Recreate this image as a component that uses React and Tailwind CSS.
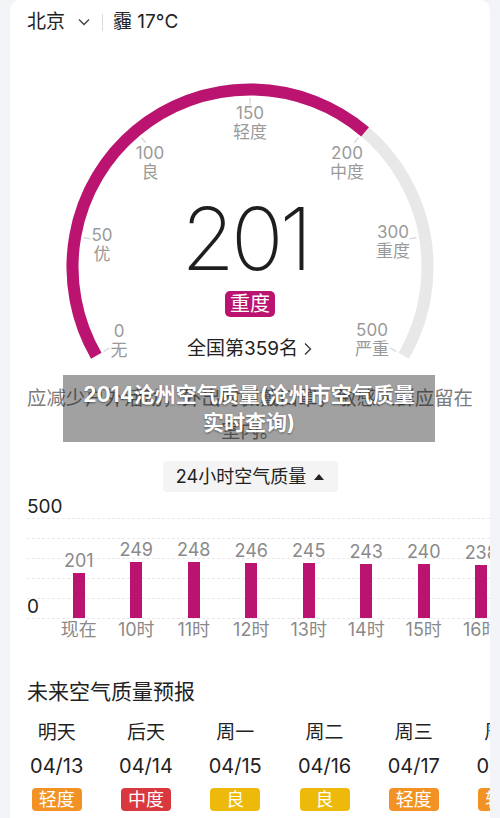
import React from "react";

const MAG = "#bb1470";

function Gauge() {
  const cx = 240, cy = 223, r = 177.5;
  const pt = (deg, rad) => {
    const a = (deg * Math.PI) / 180;
    return [cx + rad * Math.cos(a), cy - rad * Math.sin(a)];
  };
  const [sx, sy] = pt(210, r);
  const [ex, ey] = pt(-30, r);
  const [mx, my] = pt(49.6, r);
  const ticks = [210, 170, 130, 90, 50, 10, -30];
  const labels = [
    ["0", "无", 109, 297],
    ["50", "优", 92, 201],
    ["100", "良", 140, 119],
    ["150", "轻度", 240, 79],
    ["200", "中度", 337, 119],
    ["300", "重度", 383, 198],
    ["500", "严重", 362, 296],
  ];
  return (
    <svg width="480" height="338" viewBox="0 0 480 338" className="block">
      <path
        d={`M ${sx} ${sy} A ${r} ${r} 0 1 1 ${ex} ${ey}`}
        fill="none"
        stroke="#e8e8e8"
        strokeWidth="12"
      />
      <path
        d={`M ${sx} ${sy} A ${r} ${r} 0 0 1 ${mx} ${my}`}
        fill="none"
        stroke={MAG}
        strokeWidth="12"
      />
      {ticks.map((t) => {
        const [x1, y1] = pt(t, 162);
        const [x2, y2] = pt(t, 169);
        return <line key={t} x1={x1} y1={y1} x2={x2} y2={y2} stroke="#d4d4d4" strokeWidth="1.2" />;
      })}
      {labels.map(([n, l, x, y]) => (
        <g key={n} fill="#9a9a9a" fontSize="17" textAnchor="middle" fontFamily="Inter, 'Noto Sans CJK SC', sans-serif">
          <text x={x} y={y - 4}>{n}</text>
          <text x={x} y={y + 15}>{l}</text>
        </g>
      ))}
    </svg>
  );
}

const bars = [
  [201, "现在"],
  [249, "10时"],
  [248, "11时"],
  [246, "12时"],
  [245, "13时"],
  [243, "14时"],
  [240, "15时"],
  [238, "16时"],
];

const forecast = [
  ["明天", "04/13", "轻度", "bg-[#f29224]"],
  ["后天", "04/14", "中度", "bg-[#d8383e]"],
  ["周一", "04/15", "良", "bg-[#edba0b]"],
  ["周二", "04/16", "良", "bg-[#edba0b]"],
  ["周三", "04/17", "轻度", "bg-[#f29224]"],
  ["周四", "04/18", "轻度", "bg-[#f29224]"],
];

export default function App() {
  return (
    <div className="relative w-[500px] h-[818px] overflow-hidden bg-[#f3f4f8] font-[Inter,'Noto_Sans_CJK_SC',sans-serif] text-[#222]">
      <div className="mx-[10px] h-[830px] bg-white rounded-t-[10px] overflow-hidden">
        {/* header */}
        <div className="h-[44px] flex items-center pl-[17px] text-[19px]">
          <span>北京</span>
          <svg width="12" height="8" viewBox="0 0 12 8" className="ml-[13px]">
            <path d="M1 1.5 L6 6.5 L11 1.5" fill="none" stroke="#444" strokeWidth="1.4" />
          </svg>
          <span className="ml-[12px] w-px h-[17px] bg-[#dcdcdc]" />
          <span className="ml-[10px]">霾 17°C</span>
        </div>

        {/* gauge */}
        <div className="relative h-[338px]">
          <Gauge />
          <div className="absolute inset-x-0 top-[151px] flex flex-col items-center">
            <div className="text-[87px] leading-none font-extralight tracking-[-4px] pr-[10px] text-[#1e1e1e]">201</div>
            <div className="mt-[9px] h-[26px] px-[5px] rounded-[5px] bg-[#bb1470] text-white text-[20px] leading-[26px]">重度</div>
            <div className="mt-[20px] flex items-center text-[19px] leading-[24px] text-[#222]">
              <span>全国第359名</span>
              <svg width="10" height="14" viewBox="0 0 10 14" className="ml-[5px]">
                <path d="M2 1.5 L7.5 7 L2 12.5" fill="none" stroke="#333" strokeWidth="1.3" />
              </svg>
            </div>
          </div>
        </div>

        {/* advice */}
        <p className="text-center text-[19.4px] leading-[33px] text-[#7c7c7c] whitespace-nowrap">
          应减少户外活动，外出时佩戴口罩，敏感人群应留在
          <br />
          室内。
        </p>

        {/* toggle */}
        <div className="mt-[13px] flex justify-center">
          <div className="h-[31px] w-[175px] rounded-[4px] bg-[#f4f4f4] flex items-center justify-center gap-[8px] text-[18px]">
            <span>24小时空气质量</span>
            <svg width="10" height="6" viewBox="0 0 10 6">
              <path d="M0 6 L5 0 L10 6 Z" fill="#222" />
            </svg>
          </div>
        </div>

        {/* chart */}
        <div className="relative mt-[3px] h-[150px]">
          <div className="absolute left-[17px] right-0 top-[23px] h-[101px] flex flex-col justify-between">
            {[0, 1, 2, 3, 4, 5].map((i) => (
              <div key={i} className="border-t border-dashed border-[#e9e9e9]" />
            ))}
          </div>
          <div className="absolute left-[17px] top-[2px] text-[19px] leading-[20px] text-[#222]">500</div>
          <div className="absolute left-[17px] top-[102px] text-[19px] leading-[20px] text-[#222]">0</div>
          <div className="relative flex pl-[40px] w-[520px]">
            {bars.map(([v, l]) => (
              <div key={l} className="w-[57.5px] shrink-0 flex flex-col items-center">
                <div className="h-[123px] flex flex-col justify-end items-center">
                  <div className="text-[18px] leading-[20px] text-[#8a8a8a] mb-[2px]">{v}</div>
                  <div className="w-[12px] bg-[#bb1470]" style={{ height: `${v * 0.224}px` }} />
                </div>
                <div className="mt-[1px] text-[18px] leading-[22px] text-[#8a8a8a] whitespace-nowrap">{l}</div>
              </div>
            ))}
          </div>
        </div>

        {/* forecast */}
        <div className="mt-[33px] pl-[17px] text-[21px] leading-[28px] text-[#222]">未来空气质量预报</div>
        <div className="mt-[14px] flex pl-[2px] w-[560px]">
          {forecast.map(([d, dt, q, c]) => (
            <div key={dt} className="w-[89.3px] shrink-0 flex flex-col items-center">
              <div className="text-[19px] leading-[26px]">{d}</div>
              <div className="mt-[6px] text-[20px] leading-[28px]">{dt}</div>
              <div className={`mt-[8px] h-[23px] w-[50px] rounded-[4px] ${c} text-white text-[18px] leading-[23px] text-center`}>{q}</div>
            </div>
          ))}
        </div>
      </div>

      {/* watermark overlay */}
      <div className="absolute left-[63px] top-[375px] w-[372px] h-[67px] bg-[rgba(0,0,0,0.37)] flex items-center justify-center">
        <div className="text-center text-white font-bold text-[21px] leading-[28px] [text-shadow:0_1px_2px_rgba(0,0,0,0.45)] whitespace-nowrap">
          2014沧州空气质量(沧州市空气质量
          <br />
          实时查询)
        </div>
      </div>
    </div>
  );
}
